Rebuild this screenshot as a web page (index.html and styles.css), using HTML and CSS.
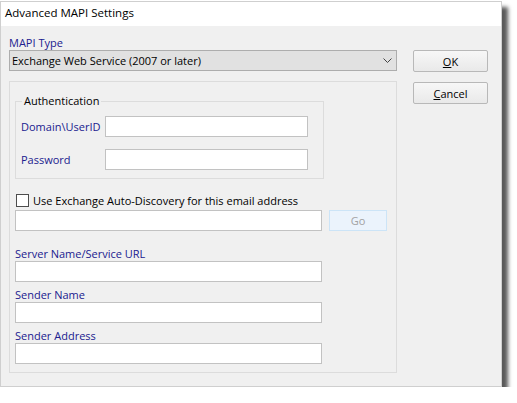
FILE: index.html
```html
<!DOCTYPE html>
<html lang="en">
<head>
<meta charset="UTF-8">
<title>Advanced MAPI Settings</title>
<link rel="stylesheet" href="styles.css">
</head>
<body>
<div class="window">
  <div class="titlebar">Advanced MAPI Settings</div>
  <div class="main">
    <div class="left">
      <div class="label">MAPI Type</div>
      <div class="select">
        <span>Exchange Web Service (2007 or later)</span>
        <svg class="chevron" width="9" height="5" viewBox="0 0 9 5"><polyline points="0.5,0.5 4.5,4.5 8.5,0.5" fill="none" stroke="#444" stroke-width="1"/></svg>
      </div>
      <div class="group">
        <fieldset class="auth">
          <legend>Authentication</legend>
          <div class="row">
            <span class="label">Domain\UserID</span>
            <input class="text short" type="text">
          </div>
          <div class="row">
            <span class="label">Password</span>
            <input class="text short" type="password">
          </div>
        </fieldset>
        <label class="check">
          <input type="checkbox">
          <span>Use Exchange Auto-Discovery for this email address</span>
        </label>
        <div class="row">
          <input class="text" type="text">
          <button class="go" disabled>Go</button>
        </div>
        <div class="field">
          <div class="label">Server Name/Service URL</div>
          <input class="text" type="text">
        </div>
        <div class="field">
          <div class="label">Sender Name</div>
          <input class="text" type="text">
        </div>
        <div class="field">
          <div class="label">Sender Address</div>
          <input class="text" type="text">
        </div>
      </div>
    </div>
    <div class="right">
      <button class="btn"><u>O</u>K</button>
      <button class="btn"><u>C</u>ancel</button>
    </div>
  </div>
</div>
</body>
</html>
```

FILE: styles.css
```css
body {
  margin: 0;
  background: #fff;
  font-family: "Open Sans", "Noto Sans", sans-serif;
  font-size: 11px;
  color: #000;
}
.window {
  margin-top: 1px;
  width: 500px;
  border: 1px solid #cfcfcf;
  background: #f0f0f0;
  box-shadow: 6px 6px 4px rgba(0, 0, 0, 0.65);
}
.titlebar {
  height: 24px;
  line-height: 22px;
  padding-left: 4px;
  background: #fff;
  font-size: 11.5px;
}
.main {
  display: flex;
  gap: 16px;
  height: 360px;
  padding: 10px 0 0 8px;
  box-sizing: border-box;
}
.left {
  width: 388px;
}
.right {
  display: flex;
  flex-direction: column;
  gap: 10px;
  padding-top: 14px;
}
.label {
  color: #20208f;
  line-height: 14px;
  height: 14px;
}
.select {
  display: flex;
  align-items: center;
  justify-content: space-between;
  height: 21px;
  box-sizing: border-box;
  padding: 0 4px 0 2px;
  background: #e1e1e1;
  border: 1px solid #adadad;
}
.group {
  margin-top: 10px;
  height: 292px;
  box-sizing: border-box;
  border: 1px solid #dcdcdc;
  padding: 0 5px;
}
.auth {
  margin: 12px 0 0;
  width: 309px;
  height: 85px;
  box-sizing: border-box;
  border: 1px solid #dcdcdc;
  padding: 8px 5px 0;
}
.auth legend {
  padding: 0 2px;
  margin-left: 1px;
  line-height: 14px;
}
.auth .row {
  margin-bottom: 12px;
  gap: 0;
}
.auth .label {
  width: 84px;
}
.row {
  display: flex;
  align-items: center;
  gap: 7px;
}
.text {
  width: 307px;
  height: 21px;
  box-sizing: border-box;
  margin: 0;
  border: 1px solid #c2c2c2;
  background: #fff;
  font: inherit;
}
.text.short {
  width: 203px;
}
.check {
  display: flex;
  align-items: center;
  gap: 4px;
  height: 14px;
  margin: 14px 0 3px 1px;
}
.check input {
  appearance: none;
  margin: 0;
  width: 13px;
  height: 13px;
  border: 1px solid #4d4d4d;
  background: #fff;
}
.go {
  width: 58px;
  height: 21px;
  margin: 0;
  border: 1px solid #cce4f7;
  background: #ebf3fc;
  color: #a2a2a2;
  font: inherit;
}
.field {
  margin-top: 16px;
}
.field + .field {
  margin-top: 6px;
}
.btn {
  width: 75px;
  height: 22px;
  margin: 0;
  border: 1px solid #b8b8b8;
  border-radius: 2px;
  background: linear-gradient(#f7f7f7, #e9e9e9);
  font: inherit;
  color: #000;
}
```
